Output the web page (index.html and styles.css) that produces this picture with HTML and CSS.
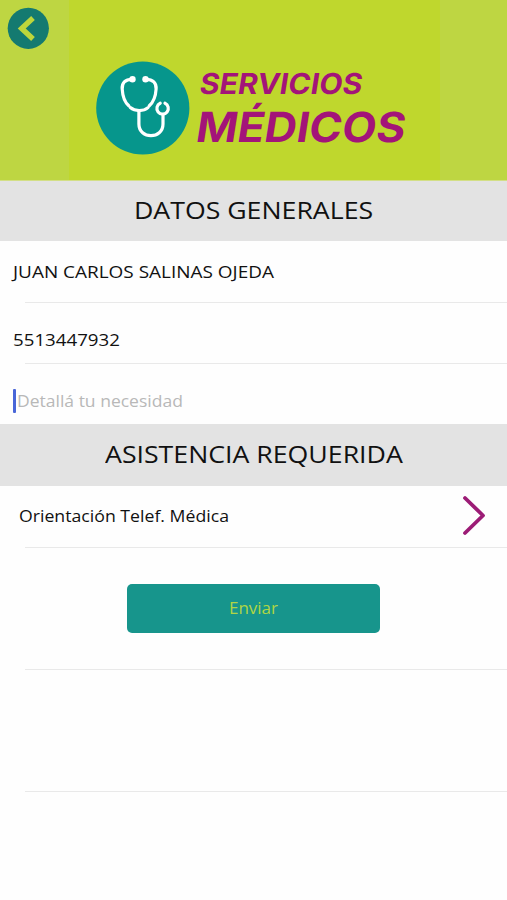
FILE: index.html
```html
<!DOCTYPE html>
<html lang="es">
<head>
<meta charset="utf-8">
<title>Servicios Médicos</title>
<link rel="stylesheet" href="styles.css">
</head>
<body>
<header class="banner">
  <button class="back" aria-label="Atrás">
    <svg width="42" height="42" viewBox="0 0 42 42"><circle cx="21.300" cy="21.300" r="20.600" fill="#147a70"/><path d="M26 11L14.700 21.400L26 32" fill="none" stroke="#bdd63b" stroke-width="5.400"/></svg>
  </button>
  <div class="brand">
    <svg width="371" height="180" viewBox="69 0 371 180">
      <circle cx="142.800" cy="108" r="46.600" fill="#06968c"/>
      <g fill="none" stroke="#fff" stroke-width="3.200" stroke-linecap="round">
        <path d="M132 79.300C125 79.500 121.800 83 122.200 89C122.600 96 125 102.500 128.800 105.800"/>
        <path d="M146 79.300C153 79.500 156.500 83 156.100 89C155.700 96 153 102.500 149.300 105.800"/>
        <path d="M130.300 107.600C135 111.500 143.500 111.500 148 107.600"/>
        <path d="M138.900 111V124C138.900 139.500 163 139.500 163 124V115"/>
        <path d="M160.200 103.200A5.700 5.700 0 1 0 165 103.200"/>
      </g>
      <circle cx="132.500" cy="79.200" r="3.200" fill="#fff"/>
      <circle cx="145.500" cy="79.200" r="3.200" fill="#fff"/>
      <text class="logo small" transform="translate(198.500 94) skewX(-9)" textLength="162.500" lengthAdjust="spacingAndGlyphs">SERVICIOS</text>
      <text class="logo large" transform="translate(194.500 142.400) skewX(-9)" textLength="209" lengthAdjust="spacingAndGlyphs">MÉDICOS</text>
    </svg>
  </div>
</header>
<main>
  <h2 class="heading"><span>DATOS GENERALES</span></h2>
  <div class="row name-row"><span class="name">JUAN CARLOS SALINAS OJEDA</span></div>
  <div class="row phone-row"><span class="phone">5513447932</span></div>
  <div class="row detail-row"><span class="caret"></span><span class="hint">Detallá tu necesidad</span></div>
  <h2 class="heading second"><span>ASISTENCIA REQUERIDA</span></h2>
  <div class="row option"><span class="service">Orientación Telef. Médica</span>
    <svg width="26" height="42" viewBox="0 0 26 42"><path d="M4 3L22 20.500L4 38" fill="none" stroke="#9c1c76" stroke-width="3.800" stroke-linecap="round" stroke-linejoin="round"/></svg>
  </div>
  <div class="row tall action"><button class="send">Enviar</button></div>
  <div class="row tall"></div>
</main>
</body>
</html>
```
FILE: styles.css
```css
* { box-sizing: border-box; }
body {
  margin: 0;
  min-height: 900px;
  background: #fefefe;
  color: #111;
  font-family: "Open Sans", sans-serif;
}
button { border: 0; padding: 0; font: inherit; }
.banner {
  display: grid;
  grid-template-columns: 69px 371px 1fr;
  height: 181px;
  background: #bed642;
  border-bottom: 1px solid #d3df86;
}
.back {
  width: 42px;
  height: 42px;
  margin: 7px 0 0 7px;
  background: none;
}
.back svg, .brand svg { display: block; }
.brand { background: #bfd72d; }
.logo {
  font-family: Inter, sans-serif;
  font-weight: 700;
  fill: #a31479;
}
.small { font-size: 29px; }
.large { font-size: 41.500px; }
.heading {
  display: flex;
  align-items: center;
  justify-content: center;
  height: 60px;
  margin: 0;
  padding-bottom: 2px;
  background: #e3e3e3;
  font-size: 24px;
  font-weight: 400;
  line-height: 32px;
  white-space: nowrap;
}
.heading span { transform: scaleX(1.112); }
.second { height: 62px; }
.row {
  display: flex;
  align-items: center;
  height: 61px;
  padding-left: 13px;
  background: linear-gradient(#e9e9e9, #e9e9e9) 25px 100% / 100% 1px no-repeat;
  font-size: 17px;
  font-weight: 500;
  line-height: 24px;
  white-space: nowrap;
}
.row span { transform-origin: left; }
.name-row { height: 62px; }
.name { transform: scaleX(1.115); }
.phone { transform: scaleX(1.1); }
.hint { transform: scaleX(1.03); }
.service { transform: scaleX(1.04); }
.phone-row { padding-top: 12px; }
.detail-row { height: 60px; padding-top: 13px; background: none; }
.caret {
  width: 3px;
  height: 24px;
  margin-right: 1px;
  border-radius: 1px;
  background: #4966d8;
}
.hint { color: #b8b8b8; font-weight: 400; }
.option {
  justify-content: space-between;
  height: 62px;
  padding: 0 20px 2px 19px;
}
.tall { height: 122px; justify-content: center; padding: 0; }
.action { padding-bottom: 2px; }
.send {
  width: 253px;
  height: 49px;
  border-radius: 5px;
  background: #17958c;
  color: #b0d544;
}
```
